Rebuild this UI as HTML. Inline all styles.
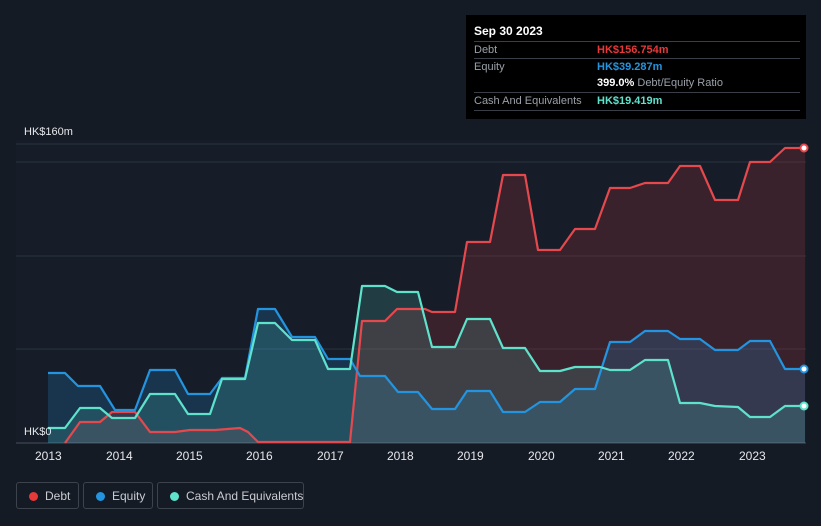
<!DOCTYPE html><html><head><style>
body{margin:0;background:#151b25;width:821px;height:526px;overflow:hidden;font-family:"Liberation Sans",sans-serif;position:relative}
.tt{position:absolute;left:466px;top:15px;width:340px;height:104px;background:#000;}
.tt .h{position:absolute;left:8px;top:9px;color:#fff;font-size:12px;font-weight:bold}
.row{position:absolute;left:8px;width:326px;font-size:11px;color:#9aa0a8;border-top:1px solid #3a3f47;height:17px;line-height:17px;white-space:nowrap}
.row span{position:absolute;left:123px;font-weight:bold}
.lg{position:absolute;top:482px;height:27px;border:1px solid #3d434c;border-radius:3px;color:#c9ccd1;font-size:12px;line-height:27px;box-sizing:border-box;white-space:nowrap}
.lg i{position:absolute;left:12px;top:9px;width:9px;height:9px;border-radius:50%}
.ax{position:absolute;top:449px;color:#e6e8eb;font-size:12px}
</style></head><body>
<svg width="821" height="526" style="position:absolute;left:0;top:0">
<rect x="16" y="140" width="790" height="303" fill="#161d28"/>
<g stroke="#2b3240" stroke-width="1">
<line x1="16" y1="144" x2="806" y2="144"/><line x1="16" y1="162" x2="806" y2="162"/><line x1="16" y1="256" x2="806" y2="256"/><line x1="16" y1="349" x2="806" y2="349"/><line x1="16" y1="443" x2="806" y2="443" stroke="#4a505a"/>
</g>
<path d="M65,443 L80,422 L100,422 L112,412 L135,412 L150,432 L175,432 L190,430 L215,430 L240,428 L248,432 L258,442 L350,442 L362,321 L385,321 L397,309 L425,309 L432,312 L455,312 L467,242 L490,242 L503,175 L525,175 L538,250 L560,250 L575,229 L595,229 L610,188 L630,188 L645,183 L668,183 L680,166 L700,166 L715,200 L738,200 L750,162 L770,162 L785,148 L805,148 L805,443 Z" fill="#e5393a" fill-opacity="0.17"/>
<path d="M48,373 L65,373 L78,386 L100,386 L115,410 L135,410 L150,370 L175,370 L188,394 L210,394 L222,378 L245,378 L258,309 L275,309 L292,337 L315,337 L328,359 L350,359 L360,376 L385,376 L398,392 L418,392 L432,409 L455,409 L467,391 L490,391 L503,412 L525,412 L540,402 L560,402 L575,389 L595,389 L610,342 L630,342 L645,331 L668,331 L680,339 L700,339 L715,350 L738,350 L750,341 L770,341 L785,369 L805,369 L805,443 L48,443 Z" fill="#2394df" fill-opacity="0.2"/>
<path d="M48,428 L65,428 L80,408 L100,408 L112,418 L135,418 L150,394 L175,394 L188,414 L210,414 L222,379 L245,379 L258,323 L275,323 L292,340 L315,340 L328,369 L350,369 L362,286 L385,286 L397,292 L418,292 L432,347 L455,347 L467,319 L490,319 L503,348 L525,348 L540,371 L560,371 L575,367 L600,367 L610,370 L630,370 L645,360 L668,360 L680,403 L700,403 L715,406 L738,407 L750,417 L770,417 L785,406 L805,406 L805,443 L48,443 Z" fill="#5fe2cc" fill-opacity="0.16"/>
<g fill="none" stroke-width="2.2" stroke-linejoin="round">
<path d="M65,443 L80,422 L100,422 L112,412 L135,412 L150,432 L175,432 L190,430 L215,430 L240,428 L248,432 L258,442 L350,442 L362,321 L385,321 L397,309 L425,309 L432,312 L455,312 L467,242 L490,242 L503,175 L525,175 L538,250 L560,250 L575,229 L595,229 L610,188 L630,188 L645,183 L668,183 L680,166 L700,166 L715,200 L738,200 L750,162 L770,162 L785,148 L805,148" stroke="#e5484d"/>
<path d="M48,373 L65,373 L78,386 L100,386 L115,410 L135,410 L150,370 L175,370 L188,394 L210,394 L222,378 L245,378 L258,309 L275,309 L292,337 L315,337 L328,359 L350,359 L360,376 L385,376 L398,392 L418,392 L432,409 L455,409 L467,391 L490,391 L503,412 L525,412 L540,402 L560,402 L575,389 L595,389 L610,342 L630,342 L645,331 L668,331 L680,339 L700,339 L715,350 L738,350 L750,341 L770,341 L785,369 L805,369" stroke="#2394df"/>
<path d="M48,428 L65,428 L80,408 L100,408 L112,418 L135,418 L150,394 L175,394 L188,414 L210,414 L222,379 L245,379 L258,323 L275,323 L292,340 L315,340 L328,369 L350,369 L362,286 L385,286 L397,292 L418,292 L432,347 L455,347 L467,319 L490,319 L503,348 L525,348 L540,371 L560,371 L575,367 L600,367 L610,370 L630,370 L645,360 L668,360 L680,403 L700,403 L715,406 L738,407 L750,417 L770,417 L785,406 L805,406" stroke="#5fe2cc"/>
</g>
<circle cx="804" cy="148" r="3.5" fill="#fff" stroke="#e5484d" stroke-width="2"/>
<circle cx="804" cy="369" r="3.5" fill="#fff" stroke="#2394df" stroke-width="2"/>
<circle cx="804" cy="406" r="3.5" fill="#fff" stroke="#5fe2cc" stroke-width="2"/>
<text x="24" y="135" fill="#e6e8eb" font-size="11" font-family="Liberation Sans">HK$160m</text>
<text x="24" y="435" fill="#e6e8eb" font-size="11" font-family="Liberation Sans">HK$0</text>
</svg>
<div class="ax" style="left:35px">2013</div><div class="ax" style="left:106px">2014</div><div class="ax" style="left:176px">2015</div><div class="ax" style="left:246px">2016</div><div class="ax" style="left:317px">2017</div><div class="ax" style="left:387px">2018</div><div class="ax" style="left:457px">2019</div><div class="ax" style="left:528px">2020</div><div class="ax" style="left:598px">2021</div><div class="ax" style="left:668px">2022</div><div class="ax" style="left:739px">2023</div>
<div class="tt"><div class="h">Sep 30 2023</div>
<div class="row" style="top:26px">Debt<span style="color:#e5393a">HK$156.754m</span></div>
<div class="row" style="top:43px">Equity<span style="color:#2394df">HK$39.287m</span></div>
<div class="row" style="top:60px;border-top:none"><span style="color:#9aa0a8;font-weight:normal"><b style="color:#fff">399.0%</b> Debt/Equity Ratio</span></div>
<div class="row" style="top:77px;border-bottom:1px solid #3a3f47">Cash And Equivalents<span style="color:#5fe2cc">HK$19.419m</span></div>
</div>
<div class="lg" style="left:16px;width:63px"><i style="background:#e5393a"></i><span style="position:absolute;left:28px">Debt</span></div>
<div class="lg" style="left:83px;width:70px"><i style="background:#2394df"></i><span style="position:absolute;left:28px">Equity</span></div>
<div class="lg" style="left:157px;width:147px"><i style="background:#5fe2cc"></i><span style="position:absolute;left:28px">Cash And Equivalents</span></div>
</body></html>
